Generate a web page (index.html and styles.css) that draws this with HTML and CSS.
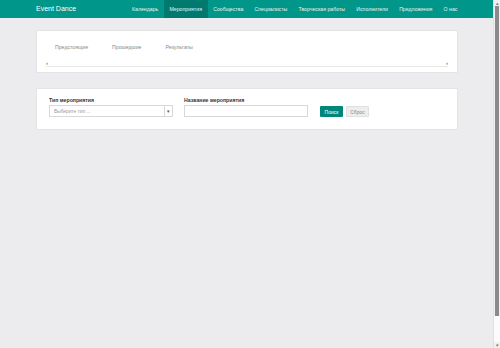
FILE: index.html
```html
<!DOCTYPE html>
<html lang="ru">

<head>
    <meta charset="UTF-8">
    <meta name="viewport" content="width=device-width, initial-scale=1.0">
    <title>Event Dance</title>
    <link rel="stylesheet" href="styles.css">
</head>

<body>
    <div class="window">
        <div class="page">
            <header>
                <div class="logo">Event Dance</div>
                <nav>
                    <a href="#">Календарь</a>
                    <a href="#" class="active">Мероприятия</a>
                    <a href="#">Сообщества</a>
                    <a href="#">Специалисты</a>
                    <a href="#">Творческая работы</a>
                    <a href="#">Исполнители</a>
                    <a href="#">Предложения</a>
                    <a href="#">О нас</a>
                </nav>
            </header>

            <div class="container">
                <div class="card tabs-card">
                    <div class="tabs">
                        <span>Предстоящие</span>
                        <span>Прошедшие</span>
                        <span>Результаты</span>
                    </div>
                    <div class="tabs-scroll">
                        <span class="arrow">&#8249;</span>
                        <span class="arrow">&#8250;</span>
                    </div>
                </div>

                <div class="card filter-card">
                    <div class="field">
                        <label>Тип мероприятия</label>
                        <div class="select">
                            <span class="placeholder">Выберите тип ...</span>
                            <span class="caret">&#9662;</span>
                        </div>
                    </div>
                    <div class="field">
                        <label>Название мероприятия</label>
                        <div class="input"></div>
                    </div>
                    <div class="buttons">
                        <button class="btn-search">Поиск</button>
                        <button class="btn-reset">Сброс</button>
                    </div>
                </div>
            </div>
        </div>

        <!-- fake window scrollbar -->
        <div class="scrollbar">
            <span class="sb-arrow">&#9652;</span>
            <div class="sb-thumb"></div>
            <div class="sb-track"></div>
            <span class="sb-arrow">&#9662;</span>
        </div>
    </div>
</body>
</html>
```

FILE: styles.css
```css
:root {
    --teal: #009689;
    --teal-dark: #00796e;
    --btn-teal: #00877a;
    --bg-color: #ececee;
    --border: #d8d8d8;
}

* {
    margin: 0;
    padding: 0;
    box-sizing: border-box;
}

body {
    font-family: 'Liberation Sans', Arial, sans-serif;
    background-color: var(--bg-color);
    color: #333;
    width: 500px;
    height: 348px;
    overflow: hidden;
}

.window {
    display: flex;
    height: 348px;
}

.page {
    flex: 1;
}

header {
    display: flex;
    justify-content: space-between;
    align-items: stretch;
    background-color: var(--teal);
    height: 18px;
    padding: 0 30px 0 36px;
}

.logo {
    color: white;
    font-size: 7px;
    line-height: 18px;
}

nav {
    display: flex;
}

nav a {
    color: #e6f4f2;
    text-decoration: none;
    font-size: 5.2px;
    line-height: 18px;
    padding: 0 5.6px;
}

nav a.active {
    background-color: var(--teal-dark);
}

.container {
    padding: 12px 35px 0 36px;
}

.card {
    background: white;
    border: 1px solid #e4e4e6;
}

.tabs-card {
    height: 43px;
    padding: 0 9px;
}

.tabs {
    display: flex;
    gap: 24px;
    padding: 13px 0 0 9px;
    height: 28px;
}

.tabs span {
    font-size: 5.2px;
    color: #888;
}

.tabs-scroll {
    display: flex;
    justify-content: space-between;
    align-items: center;
    height: 8px;
    border-bottom: 1px solid #e8e8e8;
    font-size: 6px;
    color: #444;
}

.filter-card {
    margin-top: 15px;
    height: 42px;
    display: flex;
    align-items: flex-end;
    padding: 0 12px 12px 12px;
    gap: 11px;
}

.field label {
    display: block;
    font-size: 5.2px;
    font-weight: bold;
    color: #333;
    margin-bottom: 2px;
}

.select, .input {
    width: 124px;
    height: 12px;
    border: 1px solid var(--border);
    display: flex;
    align-items: center;
}

.placeholder {
    flex: 1;
    font-size: 4.8px;
    color: #999;
    padding-left: 4px;
}

.caret {
    width: 8px;
    height: 100%;
    border-left: 1px solid var(--border);
    font-size: 5px;
    color: #555;
    display: flex;
    align-items: center;
    justify-content: center;
}

.buttons {
    display: flex;
    gap: 3px;
    margin-left: 1px;
}

.buttons button {
    font-family: inherit;
    font-size: 5px;
    height: 11px;
    width: 23px;
    border: none;
    border-radius: 1px;
}

.btn-search {
    background-color: var(--btn-teal);
    color: white;
}

.btn-reset {
    background-color: #eceeef;
    color: #888;
    border: 1px solid #e0e0e0 !important;
}

.scrollbar {
    width: 7px;
    background: #f1f1f1;
    display: flex;
    flex-direction: column;
    align-items: center;
    border-left: 1px solid #e0e0e0;
}

.sb-arrow {
    font-size: 5px;
    line-height: 6px;
    color: #777;
}

.sb-thumb {
    width: 4px;
    height: 310px;
    background: #8a8a8a;
}

.sb-track {
    flex: 1;
    width: 100%;
    background: #fbfbfb;
}
```
